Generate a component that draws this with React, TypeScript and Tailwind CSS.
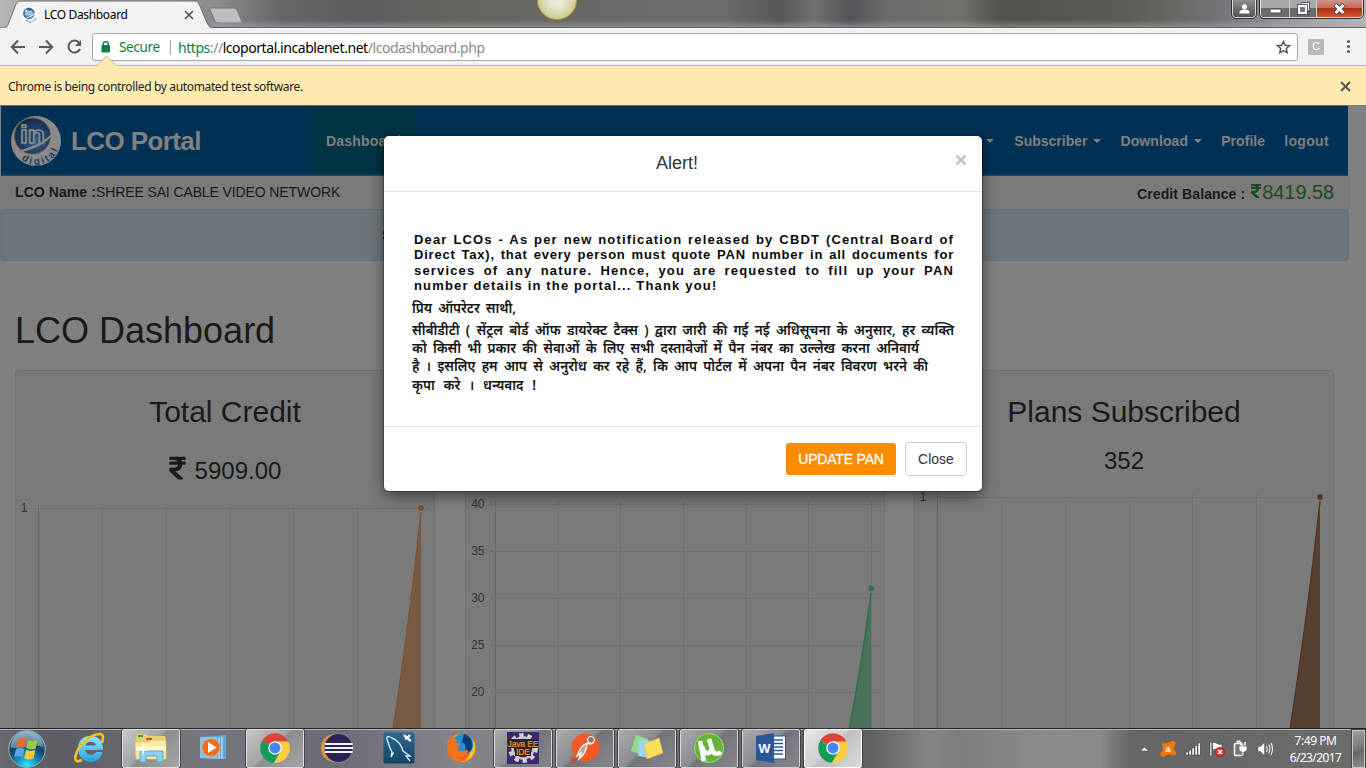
import type { ReactNode } from "react";
import { FaRupeeSign } from "react-icons/fa";

const UI = "font-['Noto_Sans',sans-serif]";

/* ---------- logos and icons ---------- */

function DigitalLogo({ size, faded }: { size: number; faded?: boolean }) {
  const white = faded ? "#8a8a8a" : "#ffffff";
  const blue = faded ? "#1d3c5c" : "#2f6fae";
  const id = faded ? "faded" : "full";
  return (
    <svg width={size} height={size} viewBox="0 0 50 50" className="shrink-0">
      <defs>
        <radialGradient id={"ball" + id} cx="0.6" cy="0.65" r="0.65">
          <stop offset="0" stopColor={faded ? "#3d6085" : "#7fb4e0"} />
          <stop offset="0.6" stopColor={faded ? "#1d3e66" : "#2f6fae"} />
          <stop offset="1" stopColor={faded ? "#142c4a" : "#1f5590"} />
        </radialGradient>
        <path id={"arc" + id} d="M10.500 43.500 A23.400 23.400 0 0 0 47 17" />
      </defs>
      <circle cx="25" cy="25" r="25" fill={white} />
      <circle cx="21.500" cy="20" r="18" fill={"url(#ball" + id + ")"} stroke={faded ? "#774d40" : "#d09a70"} strokeWidth="1" />
      <path d="M1 36 C18 33 34 26 46 13 C38 27 22 35 5 36.500Z" fill={white} />
      <text x="9" y="26.500" fontSize="24" fontWeight="bold" fill={blue} stroke={white} strokeWidth="1.500" fontFamily="Liberation Sans" textLength="25" lengthAdjust="spacingAndGlyphs">in</text>
      <text fontSize="10" fontWeight="bold" fill={blue} fontFamily="Liberation Sans" letterSpacing="2.300">
        <textPath href={"#arc" + id}>digital</textPath>
      </text>
    </svg>
  );
}

function ChromeLogo() {
  return (
    <svg width="30" height="30" viewBox="0 0 30 30">
      <path d="M15 15 L2.2 7.6 A14.8 14.8 0 0 1 27.8 7.6 L28.4 9 H15Z" fill="#db4437" />
      <path d="M15 15 L2.2 7.6 A14.8 14.8 0 0 0 14 29.8 L20.5 18.5Z" fill="#0f9d58" />
      <path d="M15 8.5 H28.3 A14.8 14.8 0 0 1 14 29.8 L20.5 18.5Z" fill="#ffcd40" />
      <circle cx="15" cy="15" r="6.8" fill="#f1f1f1" />
      <circle cx="15" cy="15" r="5.4" fill="#4285f4" />
    </svg>
  );
}

function StartOrb() {
  return (
    <svg width="38" height="38" viewBox="0 0 38 38">
      <defs>
        <radialGradient id="orb" cx="0.5" cy="0.95" r="0.9">
          <stop offset="0" stopColor="#2fe4ff" />
          <stop offset="0.35" stopColor="#1588b8" />
          <stop offset="0.65" stopColor="#123f63" />
          <stop offset="1" stopColor="#6f97b0" />
        </radialGradient>
      </defs>
      <circle cx="19" cy="19" r="18.3" fill="url(#orb)" stroke="#8fb0c0" strokeWidth="1" />
      <path d="M3 17 A16 16 0 0 1 35 17 C25 13 13 21 3 17Z" fill="#c8dce6" opacity="0.4" />
      <path d="M10 9 C13 7 16 7.5 18.5 9 L16.8 17.5 C14 16 11 16 8.3 17.3Z" fill="#ee6a30" />
      <path d="M20 10 C23 11.5 26 11.5 29.5 10 L27.6 18.5 C24 20 21 19.5 18.3 18Z" fill="#9bcb45" />
      <path d="M8 19 C11 17.5 14 17.5 16.5 19 L14.7 27.5 C12 26 9 26 6.2 27.3Z" fill="#54a8e8" />
      <path d="M18 19.8 C21 21.3 24 21.3 27.3 20 L25.4 28.5 C22 30 19 29.5 16.2 28Z" fill="#ffc93c" />
    </svg>
  );
}

function IELogo() {
  return (
    <svg width="32" height="32" viewBox="0 0 32 32">
      <defs>
        <linearGradient id="ie" x1="0" y1="0" x2="0" y2="1">
          <stop offset="0" stopColor="#9ae6ff" />
          <stop offset="1" stopColor="#21a3e0" />
        </linearGradient>
      </defs>
      <path d="M29.5 20 H23 C21.5 24 12.5 23.5 12.3 18 H30 C30.5 9 25 4 18 4 C9 4 5 10 5 16.5 C5 24 10.5 30 18 30 C24 30 28 26 29.5 20Z M12.5 13.5 C13 8.5 22.5 8.5 23 13.5Z" fill="url(#ie)" fillRule="evenodd" />
      <path d="M29 11 C31 5 30 2 26.5 2 C18 2 5 13 2.5 24 C1.5 29 4 30.5 9 28" fill="none" stroke="#f6c21c" strokeWidth="2.6" />
    </svg>
  );
}

function ExplorerIcon() {
  return (
    <svg width="34" height="32" viewBox="0 0 34 32">
      <path d="M2 4 L4 2 H12 L14 4 H31 L32 8 V27 H2Z" fill="#e8cf75" />
      <path d="M4 3 h5 v2 h-5z" fill="#2f9e44" />
      <path d="M12 6 h6 v2 h-6z" fill="#d9482b" />
      <path d="M21 8 h6 v2 h-6z" fill="#3a8bd0" />
      <path d="M1 10 H15 L17 8 H32 V27 H2Z" fill="#f9eba6" stroke="#dfc56d" strokeWidth="0.8" />
      <path d="M2 14 H32 V19 H2Z" fill="#fff6c7" />
      <path d="M6 19 H29 V30 H23 V24 H12 V30 H6Z" fill="#8fd0e8" stroke="#5ba9cb" strokeWidth="1" />
      <path d="M9 10 L10 16 L15 18 L10 19 L9 25 L8 19 L3 18 L8 16Z" fill="#fff" />
    </svg>
  );
}

function MediaIcon() {
  return (
    <svg width="30" height="28" viewBox="0 0 30 28">
      <path d="M2 3 L28 1 V25 L2 24Z" fill="#5ea7d4" />
      <path d="M21 3 V25 M24 2.5 V25" stroke="#b6dcf2" strokeWidth="1.4" />
      <path d="M2 3 H19 V25 L2 24Z" fill="#8cc3e4" />
      <circle cx="13" cy="13.5" r="8.8" fill="#ef6b1f" />
      <circle cx="13" cy="13.5" r="8.8" fill="none" stroke="#f59b5b" strokeWidth="0.8" />
      <path d="M10 8 L18.5 13.5 L10 19Z" fill="#fff" />
    </svg>
  );
}

function EclipseIcon() {
  return (
    <svg width="34" height="30" viewBox="0 0 34 30">
      <circle cx="15" cy="15" r="14" fill="#f7941e" />
      <circle cx="18.5" cy="15" r="14.5" fill="#2c2255" stroke="#e5e3ee" strokeWidth="0.4" />
      <path d="M5 11 H32.5 M4.5 15 H33 M5 19 H32.5" stroke="#f3f1fa" strokeWidth="1.9" />
    </svg>
  );
}

function MySqlIcon() {
  return (
    <svg width="32" height="32" viewBox="0 0 32 32">
      <defs>
        <linearGradient id="sql" x1="0" y1="0" x2="0" y2="1">
          <stop offset="0" stopColor="#2d6b92" />
          <stop offset="1" stopColor="#144265" />
        </linearGradient>
      </defs>
      <rect x="0.5" y="0.5" width="31" height="31" rx="2" fill="url(#sql)" />
      <path d="M8 25 L9 20 C6 15 5 10 4 7 C3 4 6 4 9 6 C15 8 19 14 20 19 L27 24 L23 24 L27 29 M8 25 C9 23 10 21 11 21" fill="none" stroke="#d7e5ec" strokeWidth="1.4" />
      <path d="M21 3 L24 6 L28 9 M24 6 L27 3 M24 6 L22 7" stroke="#fff" strokeWidth="2.2" />
    </svg>
  );
}

function FirefoxIcon() {
  return (
    <svg width="32" height="32" viewBox="0 0 32 32">
      <circle cx="16.500" cy="16" r="14.500" fill="#e8641b" />
      <path d="M8 5 C15 -1 27 2 30 12 C32 23 24 31 15 30 C24 28 26 20 25 15Z" fill="#ffc62b" />
      <circle cx="17.500" cy="12.500" r="10.800" fill="#2a8fd0" />
      <path d="M19 2 C26 4 29 11 26.500 17 C25 20 22 22 18 22 C22 18 21 12 17 10Z" fill="#0c3d76" />
      <path d="M3 8 C5 6 5 4 6 3 C7 6 9 6.500 12 7 C10 8 10 10 12 11 C15 11 16 12 14 14 C11 15 12 19 16 19 C20 19.500 22 17 23 18 C23 25 15 27 10 23 C14 30 22 29 26 25 C19 33 5 31 2.500 20 C1.500 15 2 11 3 8Z" fill="#f0751e" />
    </svg>
  );
}

function JavaEEIcon() {
  return (
    <svg width="32" height="32" viewBox="0 0 32 32">
      <rect width="32" height="32" fill="#40286c" />
      <circle cx="16" cy="16" r="12" fill="none" stroke="#d3d3d3" strokeWidth="6" strokeDasharray="4 3.540" />
      <circle cx="16" cy="16" r="10.5" fill="#2d2638" stroke="#c9c9c9" strokeWidth="2.5" />
      <rect x="1" y="7" width="30" height="9" fill="#2a2335" />
      <rect x="8" y="16" width="16" height="8" fill="#2a2335" />
      <g fontFamily="Liberation Sans" fontSize="8.6" fill="#ff8a1c" stroke="#ff8a1c" strokeWidth="0.2">
        <text x="0.5" y="14.500" textLength="31">Java EE</text>
        <text x="9" y="23" textLength="14">IDE</text>
      </g>
    </svg>
  );
}

function PostmanIcon() {
  return (
    <svg width="32" height="32" viewBox="0 0 32 32">
      <circle cx="16.5" cy="15.5" r="14" fill="#f15a24" />
      <path d="M2 25 L8 29 L2 31Z" fill="#d9481a" />
      <path d="M18 8 C20 5 24 6 25 8 C25 12 21 13 19 11 M18 11 C13 13 10 18 8 24 L12 21 L10 27 C15 23 18 18 18 11Z" fill="#b9a89c" stroke="#fff" strokeWidth="1.3" />
      <circle cx="22" cy="7.8" r="3.4" fill="#837972" stroke="#fff" strokeWidth="1" />
    </svg>
  );
}

function NotesIcon() {
  return (
    <svg width="34" height="28" viewBox="0 0 34 28">
      <path d="M6 1 L18 5 L13 21 L1 17Z" fill="#8fdc8b" />
      <path d="M9 6 L22 7 L21 24 L8 22Z" fill="#9fd6f7" />
      <path d="M14 10 L29 4 L33 19 L17 25Z" fill="#f8e05e" stroke="#dfc13c" strokeWidth="0.6" />
    </svg>
  );
}

function TorrentIcon() {
  return (
    <svg width="32" height="32" viewBox="0 0 32 32">
      <circle cx="16" cy="16" r="15.3" fill="#66b53a" />
      <circle cx="16" cy="16" r="14.5" fill="none" stroke="#9ed37d" strokeWidth="1" />
      <path d="M7 9 L11 29 M9 14 C11 24 18 22 19 17 L16 7 M19 17 C20 22 24 23 28 20" fill="none" stroke="#fff" strokeWidth="4.6" />
    </svg>
  );
}

function WordIcon() {
  return (
    <svg width="32" height="32" viewBox="0 0 32 32">
      <rect x="16" y="4" width="14.5" height="23" fill="#fff" stroke="#2b579a" strokeWidth="1" />
      <path d="M18 8 H28 M18 11.5 H28 M18 15 H28 M18 18.5 H28 M18 22 H28" stroke="#2b579a" strokeWidth="1.5" />
      <path d="M1 4 L19 1 V31 L1 28Z" fill="#2b579a" />
      <text x="3.6" y="20.5" fontFamily="Liberation Sans" fontWeight="bold" fontSize="12.5" fill="#fff">W</text>
    </svg>
  );
}

/* ---------- browser frame ---------- */

function TitleBar() {
  return (
    <div
      className="relative flex h-7 shrink-0 overflow-hidden bg-[linear-gradient(90deg,#b5b5b7_0,#8a8a8e_220px,#66666b_280px,#5c5c60_360px,#65655f_440px,#686865_560px,#6c6d68_720px,#575753_780px,#70716c_815px,#54545a_850px,#6c6d69_890px,#70716b_960px,#53534d_1000px,#5c5b55_1130px,#6a6b66_1180px,#74747a_1220px,#a8a8aa_1320px,#b8b8ba_1366px)]"
    >
      <svg width="250" height="28" className="shrink-0">
        <path d="M0 28 H5 C8 27 8 24 9 22 L16 4 Q17 1 20 1 H195 Q198 1 199 4 L207 23 Q209 28 213 28" fill="#f2f2f2" stroke="#6f6f73" strokeWidth="1" />
        <path d="M211 8 H234 Q236 8 237 10 L242 22 Q242 23 240 23 H219 Q216 23 215 21 L210 10 Q209.500 8 211 8Z" fill="#bdbdbf" stroke="#77777b" />
      </svg>
      <div className={`absolute top-0 left-[22px] flex h-7 w-[174px] items-center pt-0.5 text-[12px] text-black ${UI}`}>
        <span className="flex size-4 bg-white"><DigitalLogo size={16} /></span>
        <span className="ml-1.5 grow tracking-[-0.340px]">LCO Dashboard</span>
        <svg width="10" height="10" viewBox="0 0 10 10" className="mr-0.5"><path d="M1 1 L9 9 M9 1 L1 9" stroke="#555" strokeWidth="1.7" /></svg>
      </div>
      <div className="absolute -top-[20px] left-[537px] size-[40px] rounded-full border border-[#b79c3a] bg-[radial-gradient(circle_at_50%_50%,#e9e9dd_20%,#d3d3a0_60%,#c9b755_100%)]" />
      <div className="absolute inset-x-0 bottom-0 h-2 border-b border-[#66626c] bg-gradient-to-b from-transparent to-[#a8a8b0]/50 [mask-image:linear-gradient(90deg,transparent_212px,black_213px)]" />
      <div className="absolute top-0 right-[3px] flex h-[18px] gap-1">
        <div className="flex w-[24px] items-center justify-center rounded-b border border-t-0 border-[#d9d9d9] bg-gradient-to-b from-[#8c8c8c] to-[#555] outline outline-[#333]">
          <svg width="11" height="10" viewBox="0 0 11 10"><circle cx="5.500" cy="2.800" r="2.500" fill="#fff" /><path d="M0.500 9.500 V8 Q1 5.500 5.500 5.500 Q10 5.500 10.500 8 V9.500Z" fill="#fff" /></svg>
        </div>
        <div className="flex w-[103px] overflow-hidden rounded-b border border-t-0 border-[#d9d9d9] outline outline-[#333]">
          <div className="flex w-[29px] items-center justify-center border-r border-[#ccc] bg-gradient-to-b from-[#a8a8a8] from-45% to-[#6b6b6b] to-50%">
            <svg width="13" height="14"><rect x="1" y="7" width="11" height="4" rx="0.500" fill="#fff" stroke="#444a60" /></svg>
          </div>
          <div className="flex w-[27px] items-center justify-center border-r border-[#ccc] bg-gradient-to-b from-[#a8a8a8] from-45% to-[#6b6b6b] to-50%">
            <svg width="13" height="13"><path d="M4 1 H12 V9 H10" fill="none" stroke="#444a60" strokeWidth="2" /><path d="M4.500 1.500 H11.500 V8.500" fill="none" stroke="#fff" strokeWidth="1.200" /><rect x="2" y="4" width="7" height="7" fill="none" stroke="#444a60" strokeWidth="3.600" /><rect x="2" y="4" width="7" height="7" fill="#777" stroke="#fff" strokeWidth="2" /></svg>
          </div>
          <div className="flex grow items-center justify-center bg-[linear-gradient(#c8988c_0,#c06a5a_45%,#b02c14_50%,#d8552f_100%)]">
            <svg width="13" height="12" viewBox="0 0 13 12"><path d="M2 1.500 L11 10.500 M11 1.500 L2 10.500" stroke="#444a60" strokeWidth="4.600" /><path d="M2.500 2 L10.500 10 M10.500 2 L2.500 10" stroke="#fff" strokeWidth="2.900" /></svg>
          </div>
        </div>
      </div>
    </div>
  );
}

function Toolbar() {
  return (
    <div className="flex h-[38px] shrink-0 items-center border-b border-[#b6b4b6] bg-[#f2f2f2]">
      <svg width="92" height="37" viewBox="0 0 92 37" fill="none" stroke="#5a5a5a" strokeWidth="2" className="shrink-0">
        <path d="M25 19 H12.500 M18 12.500 L11.800 19 L18 25.500" />
        <path d="M39 19 H52 M46 12.500 L52.200 19 L46 25.500" />
        <path d="M79.500 15.200 A6 6 0 1 0 80 21" />
        <path d="M81 12 V18 H75Z" fill="#5a5a5a" stroke="none" />
      </svg>
      <div className={`mt-px flex h-7 w-[1206px] shrink-0 items-center rounded-[3px] border border-[#a9a9a9] bg-white text-[14px] ${UI}`}>
        <svg width="10" height="14" viewBox="0 0 10 14" className="ml-[8px]"><rect x="0.500" y="5" width="8.500" height="7.500" rx="0.800" fill="#0b8043" /><path d="M2.300 6 V3.800 Q2.300 1.800 4.750 1.800 Q7.200 1.800 7.200 3.800 V6" fill="none" stroke="#0b8043" strokeWidth="1.500" /></svg>
        <span className="ml-2 w-[42px] text-[13.500px] whitespace-nowrap tracking-[-0.350px] text-[#0b8043]">Secure</span>
        <span className="ml-[9px] h-[15px] w-px bg-[#a8a8a8]" />
        <span className="ml-[7px] grow whitespace-nowrap tracking-[-0.450px] text-[#8a8a8a]">
          <span className="text-[#0b8043]">https</span>://<span className="text-black">lcoportal.incablenet.net</span>/lcodashboard.php
        </span>
        <svg width="15" height="14" viewBox="0 0 15 14" className="mr-[6px]"><path d="M7.500 1.500 L9.200 5.300 L13.500 5.700 L10.300 8.500 L11.200 12.700 L7.500 10.500 L3.800 12.700 L4.700 8.500 L1.500 5.700 L5.800 5.300Z" fill="none" stroke="#5a5a5a" strokeWidth="1.500" /></svg>
      </div>
      <div className="ml-[10px] flex size-4 items-center justify-center rounded-[1px] bg-[#b9b9b9] font-['Liberation_Sans',sans-serif] text-[11px] text-white">C</div>
      <div className="ml-[23px] flex flex-col gap-0.5">
        <i className="size-[3px] rounded-full bg-[#5a5a5a]" />
        <i className="size-[3px] rounded-full bg-[#5a5a5a]" />
        <i className="size-[3px] rounded-full bg-[#5a5a5a]" />
      </div>
    </div>
  );
}

function InfoBar() {
  return (
    <div className={`relative flex h-[39px] shrink-0 items-center justify-between bg-[#ffeab2] pr-[15px] pl-2 text-[12px] text-[#222] ${UI}`}>
      <svg width="20" height="11" className="absolute -top-[11px] left-[97px]"><path d="M0 10.500 L9.500 1 L19 10.500" fill="#ffeab2" stroke="#b6b4a6" /><rect x="1" y="10" width="18" height="1" fill="#ffeab2" /></svg>
      <span className="pt-[3px] tracking-[-0.350px] whitespace-nowrap">Chrome is being controlled by automated test software.</span>
      <svg width="11" height="11" viewBox="0 0 11 11" className="mt-px"><path d="M1 1 L10 10 M10 1 L1 10" stroke="#555" strokeWidth="2" /></svg>
    </div>
  );
}

/* ---------- dashboard page ---------- */

function Caret() {
  return <i className="ml-[6px] border-x-4 border-t-4 border-x-transparent border-t-[#808080]" />;
}

function Navbar() {
  return (
    <div className="mx-px flex h-[70px] w-[1347px] items-center bg-[#003054] text-[14px] font-bold text-[#808080]">
      <div className="ml-[10px]"><DigitalLogo size={50} faded /></div>
      <span className="ml-[10px] w-[240px] text-[26px] tracking-[-0.600px]">LCO Portal</span>
      <span className="flex h-full w-[105px] items-center bg-[#003344] pl-[15px] tracking-[0.200px]">Dashboard</span>
      <span className="flex grow items-center justify-end pr-[19px]">
        <Caret />
        <span className="ml-5 flex items-center">Subscriber<Caret /></span>
        <span className="ml-[19px] flex items-center tracking-[0.100px]">Download<Caret /></span>
        <span className="ml-[19px] tracking-[0.060px]">Profile</span>
        <span className="ml-[19px] tracking-[0.350px]">logout</span>
      </span>
    </div>
  );
}

type Chart = {
  left: number;
  top: number;
  xs: number[];
  rows: { y: number; label: string }[];
  area: string;
  line: string;
  dot: [number, number];
  fill: string;
  stroke: string;
};

const charts: Chart[] = [
  {
    left: 16, top: 505,
    xs: [38.5, 102.5, 166.5, 230.5, 293.5, 357.5],
    rows: [{ y: 508.5, label: "1" }],
    area: "M421 510 Q411 610 393 730 H421Z", line: "M421 512 Q411 610 393 730",
    dot: [421, 508], fill: "#795b43", stroke: "#7f5433",
  },
  {
    left: 466, top: 501,
    xs: [495.5, 558.5, 620.5, 683.5, 746.5, 808.5, 871.5],
    rows: [{ y: 504.5, label: "40" }, { y: 551.5, label: "35" }, { y: 598.5, label: "30" }, { y: 645.5, label: "25" }, { y: 692.5, label: "20" }],
    area: "M871 590 Q863 658 849 730 H871Z", line: "M871 592 Q863 658 849 730",
    dot: [871, 588.500], fill: "#4a7159", stroke: "#307049",
  },
  {
    left: 915, top: 494,
    xs: [937.5, 1001.5, 1065.5, 1129.5, 1192.5, 1256.5],
    rows: [{ y: 497.5, label: "1" }],
    area: "M1320 499 Q1309 605 1290 730 H1320Z", line: "M1320 501 Q1309 605 1290 730",
    dot: [1320, 497], fill: "#544034", stroke: "#553425",
  },
];

function ChartView({ c }: { c: Chart }) {
  const right = c.dot[0] + 10;
  return (
    <svg width="418" height="237" viewBox={`${c.left} 491 418 237`} className="mt-auto shrink-0">
      {c.xs.map((x, i) => (
        <path key={x} d={`M${x} ${c.top} V728`} stroke={i ? "#717171" : "#696969"} />
      ))}
      {c.rows.map((r) => (
        <g key={r.label}>
          <path d={`M${c.xs[0] - 5.5} ${r.y} H${right}`} stroke="#717171" />
          <text x={c.xs[0] - 11} y={r.y + 3.5} textAnchor="end" fontSize="12" fill="#333" fontFamily="Liberation Sans">{r.label}</text>
        </g>
      ))}
      <path d={c.area} fill={c.fill} />
      <path d={c.line} fill="none" stroke={c.stroke} strokeWidth="1.500" />
      <circle cx={c.dot[0]} cy={c.dot[1]} r="3.500" fill={c.stroke} stroke="#858080" strokeWidth="1" />
    </svg>
  );
}

function Well({ chart, title, children }: { chart: Chart; title?: string; children?: ReactNode }) {
  return (
    <div className="flex h-[380px] w-[420px] shrink-0 flex-col items-center rounded-t border border-b-0 border-[#717171] bg-[#7a7a7a]">
      {title && <div className="mt-[24px] h-[33px] text-[30px] leading-[33px]">{title}</div>}
      {children}
      <ChartView c={chart} />
    </div>
  );
}

function Page() {
  return (
    <div className="flex h-full w-[1350px] flex-col overflow-hidden text-[#1a1a1a]">
      <div className="h-px shrink-0 bg-[#6b6860]" />
      <div className="shrink-0"><Navbar /></div>
      <div className="flex h-[33px] shrink-0 items-start justify-between rounded-r bg-[#7a7a7a] pr-4 pl-[15px] text-[14px] shadow-[1px_0_3px_#747474]">
        <span className="pt-[6px] tracking-[-0.110px]"><b className="tracking-[0.080px]">LCO Name :</b>SHREE SAI CABLE VIDEO NETWORK</span>
        <span className="flex items-baseline pt-[1px]">
          <b className="mr-[6px] tracking-[0.100px]">Credit Balance :</b>
          <span className="flex items-center text-[20px] tracking-[-0.080px] text-[#1e4a20]"><FaRupeeSign className="mr-px -mt-0.5 h-[16px] w-[10px]" />8419.58</span>
        </span>
      </div>
      <div className="flex h-[52px] w-[1349px] shrink-0 items-center rounded border border-[#5e7478] bg-[#6c757b] pl-[381px] text-[14px] font-bold">S</div>
      <h1 className="mt-[50px] ml-[15px] h-[40px] shrink-0 text-[36px] leading-[40px]">LCO Dashboard</h1>
      <div className="mt-[19px] ml-[15px] flex h-[358px] shrink-0 gap-[29.500px] overflow-hidden [&>div]:h-[358px]">
        <Well chart={charts[0]} title="Total Credit">
          <div className="mt-[25px] flex items-center text-[24px] leading-[27px]">
            <FaRupeeSign className="-mt-px mr-[9px] h-[26px] w-[17px]" />
            <span className="pt-[4px]">5909.00</span>
          </div>
        </Well>
        <Well chart={charts[1]} />
        <Well chart={charts[2]} title="Plans Subscribed">
          <div className="mt-[19px] text-[24px] leading-[27px]">352</div>
        </Well>
      </div>
    </div>
  );
}

const english = [
  "Dear LCOs - As per new notification released by CBDT (Central Board of",
  "Direct Tax), that every person must quote PAN number in all documents for",
  "services of any nature. Hence, you are requested to fill up your PAN",
];

function AlertModal() {
  const hi = "whitespace-nowrap [text-align-last:justify]";
  return (
    <div className="absolute top-[31px] left-[384px] flex h-[355px] w-[598px] flex-col overflow-hidden rounded-[5px] bg-white text-[#333]">
      <div className="relative flex h-[56px] shrink-0 items-center justify-center border-b border-[#e5e5e5] pr-[12px] text-[18px]">
        Alert!
        <svg width="12" height="12" viewBox="0 0 12 12" className="absolute top-[18px] right-[15px]"><path d="M1.500 1.500 L10.500 10.500 M10.500 1.500 L1.500 10.500" stroke="#c4c4c4" strokeWidth="2.600" /></svg>
      </div>
      <div className="h-[234px] shrink-0 pt-[40px] pl-[30px]">
        <div className="w-[540px] text-[13px] leading-[15.400px] font-bold tracking-[1.170px] text-[#0a0a0a]">
          {english.map((l, i) => (
            <div key={l} className={i === 1 ? "w-[540px] tracking-[0.780px] whitespace-nowrap [text-align-last:justify]" : "w-[540px] whitespace-nowrap [text-align-last:justify]"}>{l}</div>
          ))}
          <div className="whitespace-nowrap">number details in the portal... Thank you!</div>
        </div>
        <div className="-ml-0.5 pt-[5px] font-['Noto_Sans','Noto_Sans_Devanagari',sans-serif] text-[13.500px] leading-[18px] font-semibold text-[#151515]">
          <div className={`mb-[4px] w-[104px] ${hi}`}>प्रिय ऑपरेटर साथी,</div>
          <div className={`w-[542px] ${hi}`}>सीबीडीटी ( सेंट्रल बोर्ड ऑफ डायरेक्ट टैक्स ) द्वारा जारी की गई नई अधिसूचना के अनुसार, हर व्यक्ति</div>
          <div className={`w-[507px] ${hi}`}>को किसी भी प्रकार की सेवाओं के लिए सभी दस्तावेजों में पैन नंबर का उल्लेख करना अनिवार्य</div>
          <div className={`w-[516px] ${hi}`}>है । इसलिए हम आप से अनुरोध कर रहे हैं, कि आप पोर्टल में अपना पैन नंबर विवरण भरने की</div>
          <div className={`mt-px w-[124px] ${hi}`}>कृपा करे । धन्यवाद !</div>
        </div>
      </div>
      <div className="flex grow items-center justify-end gap-[9px] border-t border-[#e5e5e5] pr-[15px] text-[14px]">
        <button className="h-[32px] w-[110px] rounded-[3px] bg-[#fb8c00] tracking-[-0.200px] text-white [-webkit-text-stroke:0.300px_white]">UPDATE PAN</button>
        <button className="h-[34px] w-[62px] rounded border border-[#ccc] bg-white">Close</button>
      </div>
    </div>
  );
}

/* ---------- taskbar ---------- */

const tasks: { name: string; icon: ReactNode; state?: "open" | "active" | "bright" }[] = [
  { name: "ie", icon: <IELogo /> },
  { name: "explorer", icon: <ExplorerIcon />, state: "bright" },
  { name: "media", icon: <MediaIcon /> },
  { name: "chrome", icon: <ChromeLogo />, state: "bright" },
  { name: "eclipse", icon: <EclipseIcon /> },
  { name: "mysql", icon: <MySqlIcon /> },
  { name: "firefox", icon: <FirefoxIcon /> },
  { name: "javaee", icon: <JavaEEIcon />, state: "open" },
  { name: "postman", icon: <PostmanIcon />, state: "open" },
  { name: "notes", icon: <NotesIcon />, state: "open" },
  { name: "torrent", icon: <TorrentIcon />, state: "open" },
  { name: "word", icon: <WordIcon />, state: "open" },
  { name: "chrome-test", icon: <ChromeLogo />, state: "active" },
];

const slot = {
  none: "",
  open: "border border-[#d4d4d8] bg-[linear-gradient(135deg,#aaaaae_0%,#8b8b91_45%,#74747b_50%,#85858b_100%)] outline outline-[#333]/70 rounded-[2px]",
  bright: "border border-[#dedede] bg-[linear-gradient(135deg,#c6c6c6_0%,#a4a4a4_45%,#8c8c8c_50%,#a6a6a6_100%)] outline outline-[#333]/70 rounded-[2px]",
  active: "border border-white bg-[linear-gradient(135deg,#e6e6e6_0%,#d0d0d0_45%,#bfbfbf_50%,#dadada_100%)] outline outline-[#333]/70 rounded-[2px]",
};

function Taskbar() {
  return (
    <div className="flex h-10 shrink-0 items-stretch border-t border-[#222] bg-[linear-gradient(90deg,#686a70_0,#5c5d63_60px,#77777e_200px,#6b6b75_330px,#85858c_460px,#707077_600px,#606064_870px,#868686_930px,#7d7d7d_960px,#8b8b8b_1040px,#8a8a8a_1100px,#666666_1130px,#6c6c6c_1366px)] shadow-[inset_0_1px_0_#b8b8b8]">
      <div className="flex w-[60px] shrink-0 items-center pl-2"><StartOrb /></div>
      <div className="flex gap-1">
        {tasks.map((t) => (
          <div key={t.name} className={`flex h-[39px] w-[58px] items-center justify-center pb-px ${slot[t.state ?? "none"]}`}>{t.icon}</div>
        ))}
      </div>
      <div className="flex grow items-center justify-end">
        <svg width="134" height="39" viewBox="1140 729 134 39" className="mr-[15px]">
          <path d="M1140.500 751 L1144.500 747 L1148.500 751Z" fill="#f4f4f4" stroke="#444" strokeWidth="0.500" />
          <path d="M1162 744 Q1163 742.500 1165.500 743.500 L1173 741 Q1176 741 1175.500 743.500 L1173.500 748.500 L1176 753 Q1176 756 1173 755.500 L1168.500 754 L1163.500 756.500 Q1160 757 1160.500 753.500 L1163 749.500Z" fill="#ff7800" />
          <text x="1165.500" y="751.500" fontSize="9" fontWeight="bold" fill="#fff" fontFamily="Liberation Sans">a</text>
          <g fill="#fff" stroke="#3c3c3c" strokeWidth="0.600">
            <rect x="1186" y="752" width="2.300" height="3" /><rect x="1189" y="750" width="2.300" height="5" /><rect x="1192" y="748" width="2.300" height="7" /><rect x="1195" y="745.500" width="2.300" height="9.500" /><rect x="1198" y="743" width="2.300" height="12" />
            <path d="M1210 742 h1.800 v14 h-1.800z M1212.500 743 C1216 741 1218 746 1222 744 V751 C1218 752 1216 748 1212.500 750Z" />
          </g>
          <circle cx="1220" cy="752" r="4.800" fill="#d92b2b" stroke="#8d1616" strokeWidth="0.500" />
          <path d="M1218 750 L1222 754 M1222 750 L1218 754" stroke="#fff" strokeWidth="1.700" />
          <rect x="1234.500" y="743.500" width="8" height="12" rx="1" fill="#777" stroke="#fff" strokeWidth="1.500" />
          <path d="M1236.500 741.500 H1240.500" stroke="#fff" strokeWidth="2" />
          <path d="M1241 742 V746 M1245 742 V746" stroke="#fff" strokeWidth="1.500" />
          <path d="M1239 746 H1247 V749 Q1247 752 1243.800 752 V756 H1242.200 V752 Q1239 752 1239 749Z" fill="#fff" stroke="#444" strokeWidth="0.500" />
          <path d="M1258 746.500 H1260.500 L1264.500 742.500 V755.500 L1260.500 751.500 H1258Z" fill="#fff" stroke="#444" strokeWidth="0.400" />
          <path d="M1266.500 746 Q1268 749 1266.500 752 M1268.800 744.500 Q1271 749 1268.800 753.500 M1271 743 Q1274 749 1271 755" fill="none" stroke="#eee" strokeWidth="1.100" />
        </svg>
        <div className={`mr-[10px] w-[53px] text-center text-[12px] leading-[17px] whitespace-nowrap text-white ${UI}`}>
          <div className="-mx-2 tracking-[-0.450px]">7:49 PM</div>
          <div className="-mx-2 tracking-[-0.600px]">6/23/2017</div>
        </div>
        <div className="mr-px h-[38px] w-[13px] self-end border border-[#c4c4c4] bg-[linear-gradient(160deg,#a0a0a0_0%,#777_50%,#666_55%,#8e8e8e_100%)] outline outline-[#444]" />
      </div>
    </div>
  );
}

export default function App() {
  return (
    <div className="flex h-[768px] w-[1366px] flex-col overflow-hidden bg-[#808080] font-['Liberation_Sans',Arial,sans-serif]">
      <TitleBar />
      <Toolbar />
      <InfoBar />
      <div className="relative h-[623px] shrink-0 overflow-hidden bg-[#808080]">
        <Page />
        <div className="absolute top-[31px] left-[384px] h-[355px] w-[598px] rounded-[5px] shadow-[0_5px_15px_rgba(0,0,0,0.5),0_0_0_1px_rgba(0,0,0,0.25)]" />
        <AlertModal />
      </div>
      <Taskbar />
    </div>
  );
}
